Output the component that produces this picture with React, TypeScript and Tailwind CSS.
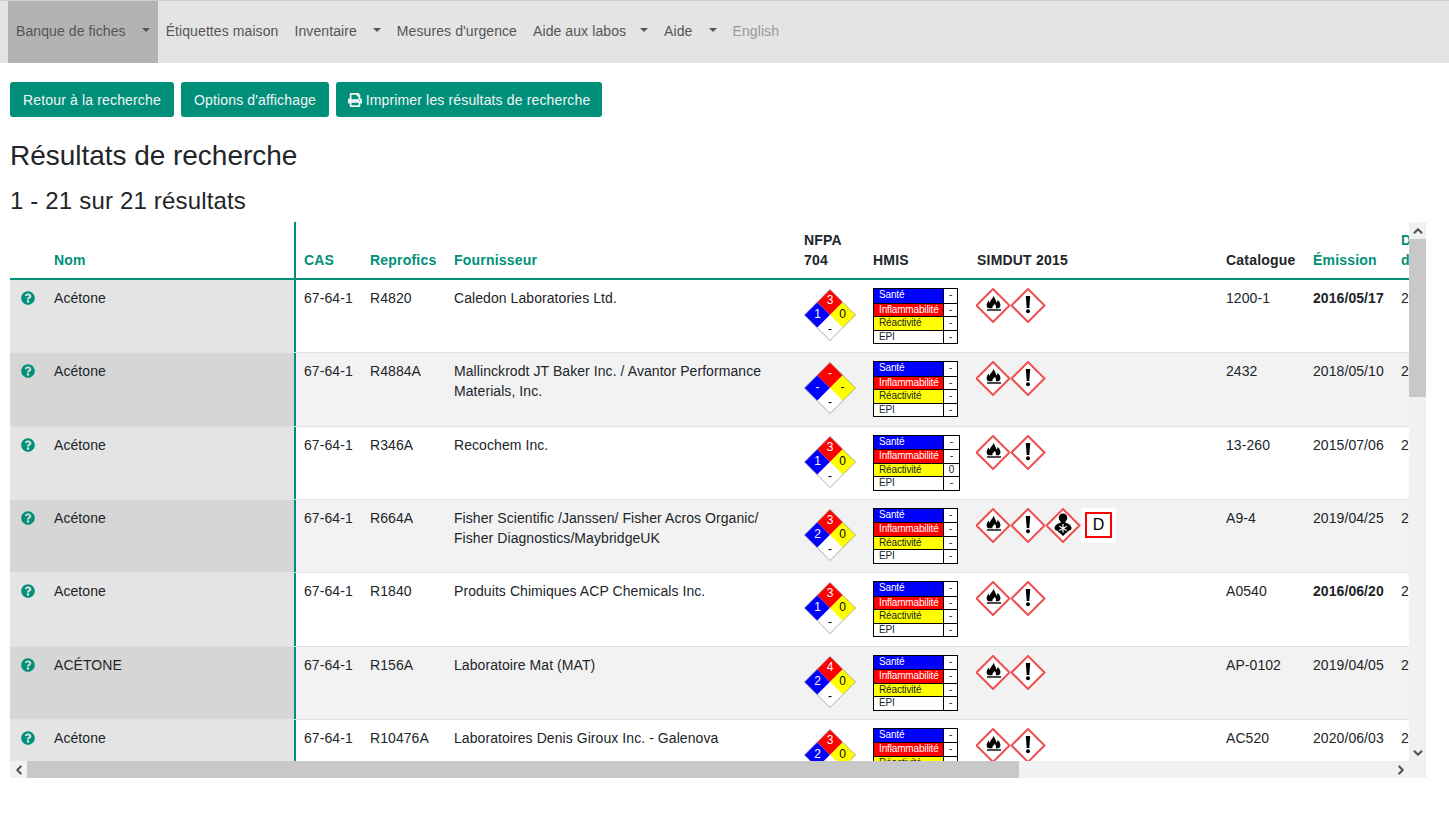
import { ChevronDown, ChevronLeft, ChevronRight, ChevronUp } from "lucide-react"
import { FaPrint, FaQuestionCircle } from "react-icons/fa"

const cols = "grid grid-cols-[36px_250px_66px_84px_350px_69px_104px_249px_87px_88px_100px] w-[1483px]"

type Row = {
  nom: string
  cas: string
  rep: string
  four: string
  nfpa: [string, string, string, string]
  hmisZero?: boolean
  pics: string[]
  cat: string
  em: string
  bold?: boolean
}

const rows: Row[] = [
  { nom: "Acétone", cas: "67-64-1", rep: "R4820", four: "Caledon Laboratories Ltd.", nfpa: ["3", "1", "0", "-"], pics: ["flame", "excl"], cat: "1200-1", em: "2016/05/17", bold: true },
  { nom: "Acétone", cas: "67-64-1", rep: "R4884A", four: "Mallinckrodt JT Baker Inc. / Avantor Performance Materials, Inc.", nfpa: ["-", "-", "-", "-"], pics: ["flame", "excl"], cat: "2432", em: "2018/05/10" },
  { nom: "Acétone", cas: "67-64-1", rep: "R346A", four: "Recochem Inc.", nfpa: ["3", "1", "0", "-"], hmisZero: true, pics: ["flame", "excl"], cat: "13-260", em: "2015/07/06" },
  { nom: "Acétone", cas: "67-64-1", rep: "R664A", four: "Fisher Scientific /Janssen/ Fisher Acros Organic/ Fisher Diagnostics/MaybridgeUK", nfpa: ["3", "2", "0", "-"], pics: ["flame", "excl", "health", "D"], cat: "A9-4", em: "2019/04/25" },
  { nom: "Acetone", cas: "67-64-1", rep: "R1840", four: "Produits Chimiques ACP Chemicals Inc.", nfpa: ["3", "1", "0", "-"], pics: ["flame", "excl"], cat: "A0540", em: "2016/06/20", bold: true },
  { nom: "ACÉTONE", cas: "67-64-1", rep: "R156A", four: "Laboratoire Mat (MAT)", nfpa: ["4", "2", "0", "-"], pics: ["flame", "excl"], cat: "AP-0102", em: "2019/04/05" },
  { nom: "Acétone", cas: "67-64-1", rep: "R10476A", four: "Laboratoires Denis Giroux Inc. - Galenova", nfpa: ["3", "2", "0", "-"], pics: ["flame", "excl"], cat: "AC520", em: "2020/06/03" },
]

function Caret({ tight }: { tight?: boolean }) {
  return <span className={`${tight ? "ml-[14px]" : "ml-4"} mt-[-2px] h-0 w-0 border-x-4 border-t-4 border-x-transparent border-t-[#555]`} />
}

function Nfpa({ v }: { v: Row["nfpa"] }) {
  return (
    <svg width="52" height="52" viewBox="0 0 52 52" className="mt-px block" fontFamily="Liberation Sans, sans-serif" fontSize="12" textAnchor="middle">
      <polygon points="26,0.5 38.75,13.25 26,26 13.25,13.25" fill="#ff0000" />
      <polygon points="13.25,13.25 26,26 13.25,38.75 0.5,26" fill="#0000ff" />
      <polygon points="38.75,13.25 51.5,26 38.75,38.75 26,26" fill="#ffff00" />
      <polygon points="26,26 38.75,38.75 26,51.5 13.25,38.75" fill="#fff" />
      <polygon points="26,0.5 51.5,26 26,51.5 0.5,26" fill="none" stroke="#888" strokeWidth="0.7" />
      <text x="26" y="15.3" fill="#fff">{v[0]}</text>
      <text x="13.5" y="29.3" fill="#fff">{v[1]}</text>
      <text x="38.5" y="29.3" fill="#000">{v[2]}</text>
      <text x="26" y="43.6" fill="#000">{v[3]}</text>
    </svg>
  )
}

function Hmis({ zero }: { zero?: boolean }) {
  const lines = [
    ["Santé", "bg-[#0000ff] text-white"],
    ["Inflammabilité", "bg-[#ff0000] text-white"],
    ["Réactivité", "bg-[#ffff00] text-[#212529]"],
    ["ÉPI", "bg-white text-[#212529]"],
  ]
  return (
    <div className={`border border-black text-[10px] leading-[12.5px] tracking-[-0.15px] font-['Liberation_Sans',sans-serif] ${zero ? "w-[87px]" : "w-[85px]"}`}>
      {lines.map(([label, cls], i) => (
        <div key={label} className={`flex h-[13.5px] ${i > 0 ? "border-t border-black" : ""}`}>
          <div className={`w-[70px] shrink-0 pl-[5px] border-r border-black ${cls}`}>{label}</div>
          <div className="flex-1 text-center bg-white text-[#212529]">{zero && i === 2 ? "0" : "-"}</div>
        </div>
      ))}
    </div>
  )
}

function Pic({ kind }: { kind: string }) {
  if (kind === "D") {
    return (
      <div className="flex h-[35px] w-[35px] items-center justify-center bg-white">
        <div className="flex h-[26px] w-[27px] items-center justify-center border-2 border-[#ff0000] text-[16px] text-black">D</div>
      </div>
    )
  }
  return (
    <svg width="35" height="35" viewBox="0 0 35 35" className="block shrink-0">
      <polygon points="17,1 33.5,17.5 17,34 0.5,17.5" fill="#fff" stroke="#f05050" strokeWidth="2" />
      {kind === "flame" && (
        <g fill="#000">
          <path d="M17.8 7.5C18 10 20.2 12 20.4 14.5C21.3 14 21.8 13 21.6 11.8C23.5 13.5 25 16 24.3 18.3C24 19.3 23.3 20 22.3 20.3H19.6C20.3 19 20.2 17.5 18.6 15.8C18.4 17 17.6 17.4 17 18C16.4 18.6 16.2 19.5 16.6 20.3H12.8C11.6 20 10.9 19 10.7 18C10.4 16 11.4 14 12.8 12.6C12.8 13.6 13.2 14.4 13.9 14.9C14 12 17.2 10.3 17.8 7.5Z" />
          <rect x="11" y="21.3" width="14" height="1.4" />
        </g>
      )}
      {kind === "excl" && (
        <g fill="#000">
          <path d="M14.8 8h4.4l-.9 12h-2.6z" />
          <circle cx="17" cy="23.2" r="2" />
        </g>
      )}
      {kind === "health" && (
        <g>
          <circle cx="17" cy="9.8" r="4.3" fill="#000" />
          <path d="M14.5 13L19.5 13L19.5 15C22 15 24.5 16.5 25.5 19.5C25.8 21 24.5 23 23 22.5L17 28L11 22.5C9.5 23 8.2 21 8.5 19.5C9.5 16.5 12 15 14.5 15Z" fill="#000" />
          <path d="M17 16v8.6M13.3 18.2l7.4 4.2M20.7 18.2l-7.4 4.2" stroke="#fff" strokeWidth="1.2" />
        </g>
      )}
    </svg>
  )
}

function TableRow({ r, i }: { r: Row; i: number }) {
  const even = i % 2 === 1
  const cell = "px-2 pt-2"
  return (
    <div className={`${cols} ${i === 0 ? "h-[72.33px]" : "h-[73.33px] border-t border-[#dee2e6]"} ${even ? "bg-[#f2f2f2]" : "bg-white"}`}>
      <div className={`col-span-2 grid grid-cols-[36px_1fr] border-r-2 border-[#00907a] ${even ? "bg-[#d6d6d6]" : "bg-[#e4e4e4]"}`}>
        <div className="pl-[11px] pt-[11px]">
          <FaQuestionCircle className="text-[#00907a]" size={14} />
        </div>
        <div className={cell}>{r.nom}</div>
      </div>
      <div className={cell}>{r.cas}</div>
      <div className={cell}>{r.rep}</div>
      <div className={cell}>{r.four}</div>
      <div className={cell}><Nfpa v={r.nfpa} /></div>
      <div className={cell}><Hmis zero={r.hmisZero} /></div>
      <div className="pl-[7px] pt-2 flex items-start">
        {r.pics.map((p, k) => <Pic key={k} kind={p} />)}
      </div>
      <div className={cell}>{r.cat}</div>
      <div className={`${cell} ${r.bold ? "font-bold" : ""}`}>{r.em}</div>
      <div className={cell}>{r.em.replace(/^\d+/, "2021")}</div>
    </div>
  )
}

export default function App() {
  const th = "px-2 pb-2 self-end font-bold tracking-[0.2px]"
  const link = "flex items-center px-2 pb-[2px]"
  return (
    <div className="min-h-[819px] bg-white font-['Liberation_Sans',Arial,sans-serif] text-[14px] leading-5 tracking-[0.07px] text-[#212529]">
      <nav className="flex h-[63px] items-stretch border-t border-[#cfcfcf] bg-[#e4e4e4] pl-2 tracking-[0.09px] text-[#555]">
        <a className={`${link} bg-[#b3b3b3]`}>Banque de fiches<Caret /></a>
        <a className={link}>Étiquettes maison</a>
        <a className={link}>Inventaire<Caret /></a>
        <a className={link}>Mesures d'urgence</a>
        <a className={link}>Aide aux labos<Caret tight /></a>
        <a className={link}>Aide<Caret /></a>
        <a className={`${link} text-[#999]`}>English</a>
      </nav>

      <div className="px-[10px] pt-[19px]">
        <div className="flex gap-[7px] tracking-[0.15px] text-[#f4f4f4]">
          <button className="h-[35px] w-[164px] rounded-[3px] bg-[#00907a]">Retour à la recherche</button>
          <button className="h-[35px] w-[148px] rounded-[3px] bg-[#00907a]">Options d'affichage</button>
          <button className="flex h-[35px] w-[266px] items-center justify-center gap-[4px] rounded-[3px] bg-[#00907a]">
            <FaPrint size={14} />Imprimer les résultats de recherche
          </button>
        </div>
        <h1 className="mt-[22px] text-[28px] leading-[34px] tracking-[-0.03px]">Résultats de recherche</h1>
        <h2 className="mt-[13px] text-[24px] leading-[29px] tracking-[0.17px]">1 - 21 sur 21 résultats</h2>

        <div className="mt-[7px] w-[1416px]">
          <div className="flex h-[539px]">
            <div className="w-[1399px] overflow-hidden">
              <div className={`${cols} h-[58px] border-b-2 border-[#00907a]`}>
                <div className="col-span-2 grid grid-cols-[36px_1fr] border-r-2 border-[#00907a]">
                  <div />
                  <div className={`${th} text-[#00907a]`}>Nom</div>
                </div>
                <div className={`${th} text-[#00907a]`}>CAS</div>
                <div className={`${th} text-[#00907a]`}>Reprofics</div>
                <div className={`${th} text-[#00907a]`}>Fournisseur</div>
                <div className={th}>NFPA 704</div>
                <div className={th}>HMIS</div>
                <div className={th}>SIMDUT 2015</div>
                <div className={th}>Catalogue</div>
                <div className={`${th} text-[#00907a]`}>Émission</div>
                <div className={`${th} text-[#00907a]`}>Date<br />d'ajout</div>
              </div>
              {rows.map((r, i) => <TableRow key={i} r={r} i={i} />)}
            </div>
            <div className="flex w-[17px] flex-col bg-[#f1f1f1] text-[#505050]">
              <div className="flex h-[17px] items-center justify-center"><ChevronUp size={14} strokeWidth={3.5} /></div>
              <div className="h-[158px] bg-[#c8c8c8]" />
              <div className="flex-1" />
              <div className="flex h-[17px] items-center justify-center"><ChevronDown size={14} strokeWidth={3.5} /></div>
            </div>
          </div>
          <div className="flex h-[17px] bg-[#f1f1f1] text-[#505050]">
            <div className="flex w-[17px] items-center justify-center"><ChevronLeft size={14} strokeWidth={3.5} /></div>
            <div className="w-[992px] bg-[#c8c8c8]" />
            <div className="w-[373px]" />
            <div className="flex w-[17px] items-center justify-center"><ChevronRight size={14} strokeWidth={3.5} /></div>
          </div>
        </div>
      </div>
    </div>
  )
}
